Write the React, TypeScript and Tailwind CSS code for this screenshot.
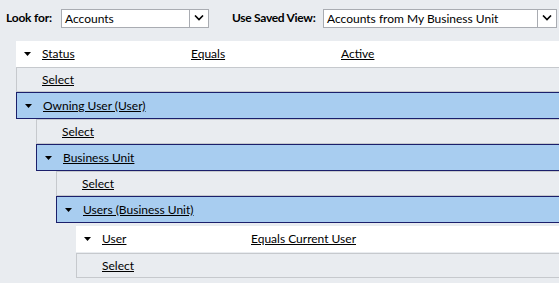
import React from 'react';

const font = { fontFamily: 'Lato, "Noto Sans", sans-serif' };

const Caret: React.FC = () => (
  <svg width="7" height="4" viewBox="0 0 7 4" className="shrink-0">
    <path d="M0 0 H7 L3.5 4 Z" fill="#000" />
  </svg>
);

const Chevron: React.FC = () => (
  <svg width="10" height="6" viewBox="0 0 10 6">
    <path d="M1 0.5 L5 4.5 L9 0.5" fill="none" stroke="#000" strokeWidth="1.6" />
  </svg>
);

interface DropdownProps {
  value: string;
  width: string;
}

const Dropdown: React.FC<DropdownProps> = ({ value, width }) => (
  <div className={`flex h-[19px] shrink-0 items-stretch border border-[#a9acb2] bg-white ${width}`}>
    <span className="flex-1 truncate pl-[3px] text-[12px] leading-[17px] text-black">{value}</span>
    <span className="flex w-[19px] items-center justify-center border-l border-[#a9acb2] bg-white">
      <Chevron />
    </span>
  </div>
);

const SelectRow: React.FC<{ boxed?: boolean }> = ({ boxed }) => (
  <div
    className={`flex h-[25px] items-center border-t border-l border-b border-[#c6c9cd] pl-[25px] ${
      boxed ? 'border-r' : ''
    }`}
  >
    <span className="underline">Select</span>
  </div>
);

const LinkRow: React.FC<{ label: string }> = ({ label }) => (
  <div className="flex h-[27px] items-center gap-[11px] border border-[#1b1f6b] bg-[#a8cdf0] pl-[8px]">
    <Caret />
    <span className="underline">{label}</span>
  </div>
);

interface ConditionProps {
  field: string;
  op: string;
  value?: string;
  opX: string;
  valueX?: string;
}

const ConditionRow: React.FC<ConditionProps> = ({ field, op, value, opX, valueX }) => (
  <div className="flex h-[26px] items-center bg-white pl-[8px]">
    <Caret />
    <span className="ml-[11px] underline">{field}</span>
    <span className={`absolute underline ${opX}`}>{op}</span>
    {value && <span className={`absolute underline ${valueX}`}>{value}</span>}
  </div>
);

export default function App() {
  return (
    <div className="h-[283px] w-[559px] overflow-hidden bg-[#e9ecf0] text-[12px] text-black" style={font}>
      <div className="flex h-[36px] items-center whitespace-nowrap">
        <span className="ml-[6px] w-[55px] shrink-0 font-bold tracking-[-0.2px]">Look for:</span>
        <Dropdown value="Accounts" width="w-[148px]" />
        <span className="ml-[23px] w-[91px] shrink-0 font-bold tracking-[-0.3px]">Use Saved View:</span>
        <Dropdown value="Accounts from My Business Unit" width="w-[234px]" />
      </div>
      <div className="relative mt-[5px] ml-[16px] w-[548px] whitespace-nowrap">
        <div className="relative">
          <ConditionRow field="Status" op="Equals" value="Active" opX="left-[175px]" valueX="left-[325px]" />
        </div>
        <SelectRow />
        <LinkRow label="Owning User (User)" />
        <div className="ml-[20px]">
          <SelectRow />
          <LinkRow label="Business Unit" />
          <div className="ml-[20px]">
            <SelectRow />
            <LinkRow label="Users (Business Unit)" />
            <div className="ml-[20px] pt-[3px]">
              <div className="relative">
                <ConditionRow field="User" op="Equals Current User" opX="left-[175px]" />
              </div>
              <div className="mt-[1px]">
                <SelectRow boxed />
              </div>
            </div>
          </div>
        </div>
      </div>
    </div>
  );
}
